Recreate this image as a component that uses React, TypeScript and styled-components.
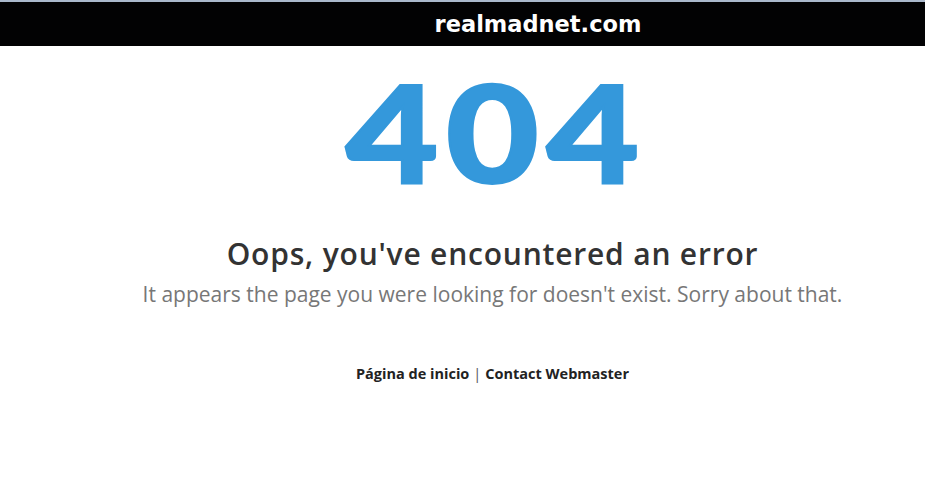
import React from "react";
import styled, { createGlobalStyle } from "styled-components";

const Global = createGlobalStyle`
  html, body { margin: 0; padding: 0; background: #ffffff; }
  body { font-family: "Open Sans", "Noto Sans", sans-serif; }
`;

const Page = styled.div`
  width: 925px;
  min-height: 477px;
  display: flex;
  flex-direction: column;
  border-top: 2px solid #aab8cb;
  box-sizing: border-box;
`;

const TopBar = styled.header`
  height: 44px;
  background: #020203;
  display: flex;
  align-items: center;
  justify-content: center;
  padding-left: 151px;
`;

const SiteName = styled.div`
  color: #ffffff;
  font-family: "DejaVu Sans", Verdana, sans-serif;
  font-weight: 700;
  font-size: 22.5px;
`;

const Main = styled.main`
  display: flex;
  flex-direction: column;
  align-items: center;
  padding-left: 60px;
`;

const BigCode = styled.div`
  margin-top: 18px;
  color: #3498db;
  font-family: Lato, sans-serif;
  font-weight: 900;
  font-size: 135px;
  line-height: 135px;
  letter-spacing: 6px;
  padding-left: 6px;
  -webkit-text-stroke: 2px #3498db;
  transform: scaleX(1.19);
`;

const Title = styled.h1`
  margin: 37px 0 0;
  color: #333333;
  font-family: "Open Sans", sans-serif;
  font-weight: 600;
  font-size: 30px;
  line-height: 36px;
  letter-spacing: 0.8px;
`;

const Sub = styled.p`
  margin: 8px 0 0;
  color: #777777;
  font-family: "Open Sans", sans-serif;
  font-weight: 400;
  font-size: 21px;
  line-height: 28px;
`;

const Links = styled.nav`
  margin-top: 56px;
  display: flex;
  gap: 4px;
  font-family: "Open Sans", sans-serif;
  font-size: 14.5px;
  font-weight: 700;
  color: #222222;
`;

const LinkItem = styled.a`
  color: #222222;
  text-decoration: none;
`;

const Sep = styled.span`
  color: #555555;
  font-weight: 400;
`;

export default function App() {
  return (
    <>
      <Global />
      <Page>
        <TopBar>
          <SiteName>realmadnet.com</SiteName>
        </TopBar>
        <Main>
          <BigCode>404</BigCode>
          <Title>Oops, you've encountered an error</Title>
          <Sub>It appears the page you were looking for doesn't exist. Sorry about that.</Sub>
          <Links>
            <LinkItem href="#">Página de inicio</LinkItem>
            <Sep>|</Sep>
            <LinkItem href="#">Contact Webmaster</LinkItem>
          </Links>
        </Main>
      </Page>
    </>
  );
}
